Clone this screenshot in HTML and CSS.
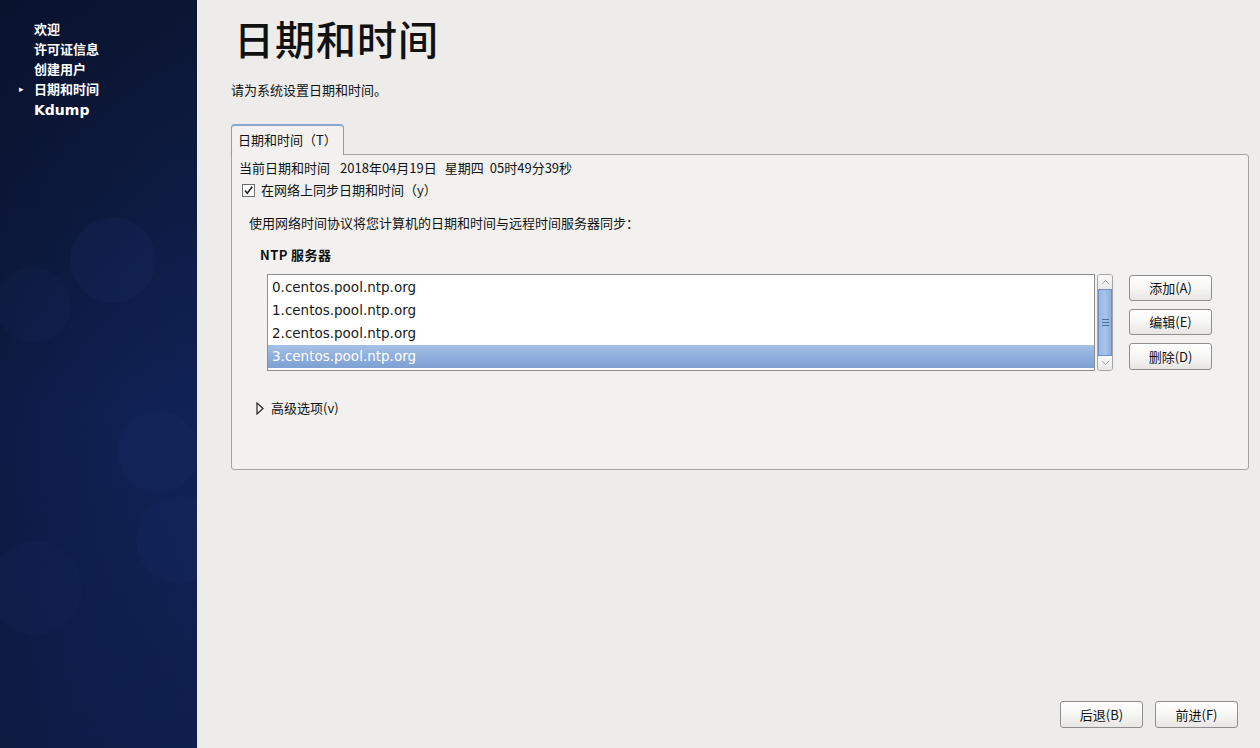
FILE: index.html
```html
<!DOCTYPE html>
<html lang="zh-CN">
<head>
<meta charset="utf-8">
<title>日期和时间</title>
<link rel="stylesheet" href="styles.css">
</head>
<body>
<aside class="sidebar">
  <ul class="steps">
    <li class="step">欢迎</li>
    <li class="step">许可证信息</li>
    <li class="step">创建用户</li>
    <li class="step current"><span class="arrow">&#9656;</span>日期和时间</li>
    <li class="step latin">Kdump</li>
  </ul>
</aside>
<main class="main">
  <h1 class="title">日期和时间</h1>
  <p class="subtitle">请为系统设置日期和时间。</p>
  <div class="tabs">
    <div class="tab">日期和时间（T）</div>
  </div>
  <section class="panel">
    <div class="row now"><span>当前日期和时间</span><span class="d1">2018年04月19日</span><span class="d2">星期四</span><span class="d3">05时49分39秒</span></div>
    <label class="row check-row">
      <span class="checkbox">
        <svg width="11" height="11" viewBox="0 0 11 11"><path d="M2 5.5 L4.3 8.3 L9.2 1.8" fill="none" stroke="#222" stroke-width="1.6"/></svg>
      </span>
      在网络上同步日期和时间（y）
    </label>
    <p class="desc">使用网络时间协议将您计算机的日期和时间与远程时间服务器同步：</p>
    <h2 class="ntp-label">NTP 服务器</h2>
    <div class="ntp-area">
      <div class="list">
        <div class="item">0.centos.pool.ntp.org</div>
        <div class="item">1.centos.pool.ntp.org</div>
        <div class="item">2.centos.pool.ntp.org</div>
        <div class="item selected">3.centos.pool.ntp.org</div>
      </div>
      <div class="scrollbar">
        <div class="sb-btn">
          <svg width="9" height="6" viewBox="0 0 9 6"><path d="M1 5 L4.5 1.5 L8 5" fill="none" stroke="#a0a0a0" stroke-width="1"/></svg>
        </div>
        <div class="sb-thumb">
          <svg width="7" height="9" viewBox="0 0 7 9"><path d="M0 1.5H7M0 4.5H7M0 7.5H7" stroke="#4d6c9c" stroke-width="1"/></svg>
        </div>
        <div class="sb-btn">
          <svg width="9" height="6" viewBox="0 0 9 6"><path d="M1 1 L4.5 4.5 L8 1" fill="none" stroke="#a0a0a0" stroke-width="1"/></svg>
        </div>
      </div>
      <div class="side-buttons">
        <button class="btn">添加(A)</button>
        <button class="btn">编辑(E)</button>
        <button class="btn">删除(D)</button>
      </div>
    </div>
    <div class="advanced">
      <svg class="expander" width="8" height="13" viewBox="0 0 8 13"><path d="M1 1 L7 6.5 L1 12 Z" fill="none" stroke="#222" stroke-width="1.2"/></svg>
      高级选项(v)
    </div>
  </section>
  <div class="footer">
    <button class="btn">后退(B)</button>
    <button class="btn">前进(F)</button>
  </div>
</main>
</body>
</html>
```

FILE: styles.css
```css
* { box-sizing: border-box; }
html, body { margin: 0; padding: 0; }
body {
  width: 1260px;
  height: 748px;
  display: flex;
  overflow: hidden;
  background: #edecea;
  font-family: "Noto Sans CJK SC", "DejaVu Sans", sans-serif;
  color: #111;
}
.sidebar {
  width: 197px;
  flex: none;
  background:
    radial-gradient(circle at 113px 260px, rgba(50,80,160,0.07) 0 42px, transparent 43px),
    radial-gradient(circle at 33px 305px, rgba(50,80,160,0.05) 0 37px, transparent 38px),
    radial-gradient(circle at 158px 452px, rgba(50,80,160,0.06) 0 40px, transparent 41px),
    radial-gradient(circle at 180px 540px, rgba(50,80,160,0.05) 0 43px, transparent 44px),
    radial-gradient(circle at 35px 588px, rgba(50,80,160,0.045) 0 46px, transparent 47px),
    linear-gradient(100deg, rgba(8,16,40,0.6) 0%, rgba(8,16,40,0.15) 60%, rgba(20,40,100,0.0) 100%),
    linear-gradient(180deg, #0c1736 0%, #11245a 55%, #0f1f4c 100%);
}
.steps {
  list-style: none;
  margin: 0;
  padding: 19px 0 0 34px;
}
.step {
  position: relative;
  color: #fff;
  font-size: 13px;
  font-weight: 700;
  line-height: 20px;
  height: 20px;
}
.step.latin {
  font-family: "DejaVu Sans", sans-serif;
  font-size: 14px;
  line-height: 22px;
}
.arrow {
  position: absolute;
  left: -15px;
  top: 0;
  font-size: 9px;
  color: #fff;
}
.main {
  flex: 1;
  display: flex;
  flex-direction: column;
  padding: 0 11px 20px 34px;
}
.title {
  margin: 12px 0 0 3px;
  font-size: 40px;
  line-height: 52px;
  font-weight: 500;
  letter-spacing: 1px;
}
.subtitle {
  margin: 18px 0 0 0;
  font-size: 13px;
  line-height: 16px;
}
.tabs {
  margin-top: 26px;
  display: flex;
}
.tab {
  width: 113px;
  height: 31px;
  margin-bottom: -1px;
  border: 1px solid #9a9a98;
  border-top: 2px solid #8aa6d0;
  border-bottom: none;
  border-radius: 4px 4px 0 0;
  background: #f2f1ef;
  font-size: 13px;
  line-height: 27px;
  padding-left: 6px;
  position: relative;
  z-index: 1;
}
.panel {
  height: 316px;
  border: 1px solid #a3a3a1;
  border-radius: 0 3px 3px 3px;
  background: #f2f1ef;
  padding: 5px 0 0 7px;
}
.row {
  display: flex;
  align-items: center;
  font-size: 13px;
  line-height: 16px;
  height: 16px;
}
.now { font-size: 13px; }
.now .d1 { margin-left: 10px; }
.now .d2 { margin-left: 8px; }
.now .d3 { margin-left: 6px; }
.check-row {
  margin-top: 6px;
  padding-left: 3px;
  font-size: 13px;
}
.checkbox {
  width: 13px;
  height: 13px;
  border: 1px solid #6d6d6d;
  background: #fff;
  display: flex;
  align-items: center;
  justify-content: center;
  margin-right: 6px;
}
.desc {
  margin: 17px 0 0 10px;
  font-size: 13px;
  line-height: 16px;
}
.ntp-label {
  margin: 16px 0 0 21px;
  font-size: 13px;
  line-height: 16px;
  font-weight: 700;
  letter-spacing: 0.4px;
}
.ntp-area {
  display: flex;
  margin: 11px 0 0 28px;
}
.list {
  width: 828px;
  height: 97px;
  border: 1px solid #8e8e8e;
  background: #fff;
  padding-top: 1px;
}
.item {
  height: 23px;
  line-height: 23px;
  padding-left: 4px;
  font-family: "DejaVu Sans", sans-serif;
  font-size: 13.5px;
  color: #1a1a1a;
}
.item.selected {
  background: linear-gradient(180deg, #a6c1e6 0%, #8eaedd 50%, #7ea0d2 100%);
  color: #fff;
}
.scrollbar {
  width: 16px;
  height: 97px;
  margin-left: 2px;
  border: 1px solid #a5a5a5;
  border-radius: 3px;
  background: #eeeeee;
  display: flex;
  flex-direction: column;
}
.sb-btn {
  height: 14px;
  display: flex;
  align-items: center;
  justify-content: center;
  background: linear-gradient(180deg, #fafafa, #e8e8e8);
  border-radius: 2px;
}
.sb-thumb {
  flex: 1;
  background: linear-gradient(90deg, #9bb8e2 0%, #a8c3ea 50%, #90afdc 100%);
  border: 1px solid #6f8fc0;
  display: flex;
  align-items: center;
  justify-content: center;
}
.side-buttons {
  display: flex;
  flex-direction: column;
  gap: 8px;
  margin-left: 16px;
  padding-top: 1px;
}
.btn {
  width: 83px;
  height: 26px;
  border: 1px solid #8f8f8f;
  border-radius: 3px;
  background: linear-gradient(180deg, #ffffff 0%, #f6f6f5 50%, #e7e6e4 100%);
  font-family: "Noto Sans CJK SC", "DejaVu Sans", sans-serif;
  font-size: 13px;
  color: #111;
  padding: 0;
  line-height: 24px;
}
.side-buttons .btn:last-child { height: 27px; }
.advanced {
  display: flex;
  align-items: center;
  margin: 29px 0 0 17px;
  font-size: 13px;
  line-height: 16px;
}
.expander { margin-right: 7px; }
.footer {
  margin-top: auto;
  display: flex;
  justify-content: flex-end;
  gap: 12px;
  padding-right: 11px;
}
.footer .btn { height: 27px; }
```
